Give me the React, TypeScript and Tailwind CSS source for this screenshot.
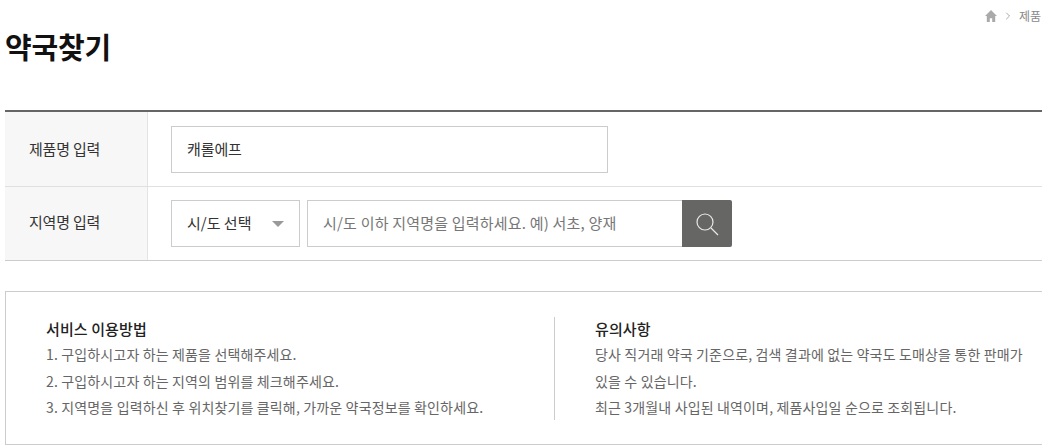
import { ChevronRight } from "lucide-react";

const font = "font-['Noto_Sans_CJK_KR','Noto_Sans',sans-serif]";

function Label({ children, className = "" }: { children: string; className?: string }) {
  return (
    <div className={`flex w-[143px] shrink-0 items-center border-r border-[#e4e4e4] bg-[#f7f7f7] pl-6 text-[15px] tracking-[-0.2px] text-[#333] ${className}`}>
      {children}
    </div>
  );
}

export default function App() {
  return (
    <div className={`${font} h-[445px] w-[1042px] overflow-hidden bg-white pl-[5px]`}>
      <div className="flex h-[32px] items-center justify-end text-[12px] text-[#888]">
        <svg width="12" height="12" viewBox="0 0 12 12" fill="#aaa">
          <path d="M6 0L0 6h1.8v6h3V8.2h2.4V12h3V6H12z" />
        </svg>
        <ChevronRight size={12} stroke="#aaa" className="mr-[5px] ml-[5px]" />
        <span className="pr-[1px]">제품</span>
      </div>
      <h1 className="h-[78px] text-[29px] leading-[28px] font-bold tracking-[-0.2px] text-[#111]">약국찾기</h1>

      <div className="border-t-2 border-[#666]">
        <div className="flex h-[75px] border-b border-[#e0e0e0]">
          <Label>제품명 입력</Label>
          <div className="flex items-center pl-[23px]">
            <div className="flex h-[47px] w-[437px] items-center border border-[#ccc] pl-[15px] text-[15px] tracking-[-0.1px] text-[#333]">
              캐롤에프
            </div>
          </div>
        </div>
        <div className="flex h-[74px] border-b border-[#ccc]">
          <Label className="pb-[3px]">지역명 입력</Label>
          <div className="flex items-center gap-[7px] pl-[23px]">
            <div className="flex h-[47px] w-[129px] items-center justify-between border border-[#ccc] pr-[15px] pl-[15px] text-[15px] text-[#333]">
              <span>시/도 선택</span>
              <span className="h-0 w-0 border-x-[6px] border-t-[6px] border-x-transparent border-t-[#999]" />
            </div>
            <div className="flex">
              <div className="flex h-[47px] w-[375px] items-center border-y border-l border-[#ccc] pl-[15px] text-[15px] tracking-[0.2px] text-[#777]">
                시/도 이하 지역명을 입력하세요. 예) 서초, 양재
              </div>
              <button className="flex h-[47px] w-[50px] items-center justify-center rounded-r-[2px] bg-[#666664]">
                <svg width="24" height="24" viewBox="0 0 24 24" fill="none" stroke="#e8e8e8" strokeWidth="1.2">
                  <circle cx="10" cy="10" r="8" />
                  <path d="M16 16l7 7" />
                </svg>
              </button>
            </div>
          </div>
        </div>
      </div>

      <div className="mt-[30px] flex h-[154px] border-y border-l border-[#ccc] pt-[25px]">
        <div className="h-[103px] w-[549px] shrink-0 border-r border-[#ccc] pl-[40px]">
          <h2 className="text-[15px] leading-[24px] font-medium tracking-[0.1px] text-[#222]">서비스 이용방법</h2>
          <div className="text-[14px] leading-[26.5px] tracking-[0.15px] text-[#666]">
            <p>1. 구입하시고자 하는 제품을 선택해주세요.</p>
            <p>2. 구입하시고자 하는 지역의 범위를 체크해주세요.</p>
            <p>3. 지역명을 입력하신 후 위치찾기를 클릭해, 가까운 약국정보를 확인하세요.</p>
          </div>
        </div>
        <div className="pr-[12px] pl-[40px]">
          <h2 className="text-[15px] leading-[24px] font-medium tracking-[0.1px] text-[#222]">유의사항</h2>
          <div className="text-[14px] leading-[26.5px] tracking-[0.15px] text-[#666]">
            <p>당사 직거래 약국 기준으로, 검색 결과에 없는 약국도 도매상을 통한 판매가 있을 수 있습니다.</p>
            <p>최근 3개월내 사입된 내역이며, 제품사입일 순으로 조회됩니다.</p>
          </div>
        </div>
      </div>
    </div>
  );
}
